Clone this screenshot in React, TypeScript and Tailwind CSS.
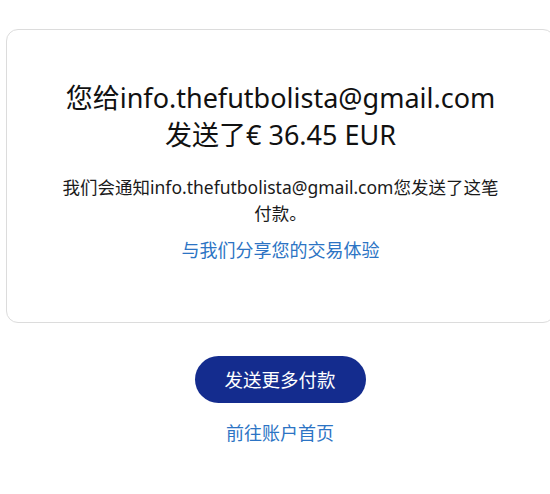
export default function App() {
  return (
    <div
      className="w-[550px] h-[494px] overflow-hidden bg-white"
      style={{ fontFamily: '"Noto Sans", "Noto Sans CJK SC", sans-serif' }}
    >
      <div className="pt-[29px] pl-[6px]">
        <div className="w-[549px] h-[294px] rounded-[12px] border border-[#dcdcdc] flex flex-col items-center pt-[49px]">
          <h1 className="text-[27px] leading-[37px] text-[#111] text-center">
            您给info.thefutbolista@gmail.com
            <br />
            发送了€ 36.45 EUR
          </h1>
          <p className="mt-[21px] w-[445px] text-[17.5px] leading-[26px] text-[#1a1a1a] text-center">
            我们会通知info.thefutbolista@gmail.com您发送了这笔
            <br />
            付款。
          </p>
          <a className="mt-[11px] text-[18px] leading-[26px] text-[#2c74c4]">
            与我们分享您的交易体验
          </a>
        </div>
      </div>
      <div className="flex flex-col items-center pt-[33px] pl-[10px]">
        <button className="w-[171px] h-[47px] rounded-full bg-[#142c8e] text-white text-[18.5px]">
          发送更多付款
        </button>
        <a className="mt-[17px] text-[18px] leading-[26px] text-[#2c74c4]">
          前往账户首页
        </a>
      </div>
    </div>
  );
}
